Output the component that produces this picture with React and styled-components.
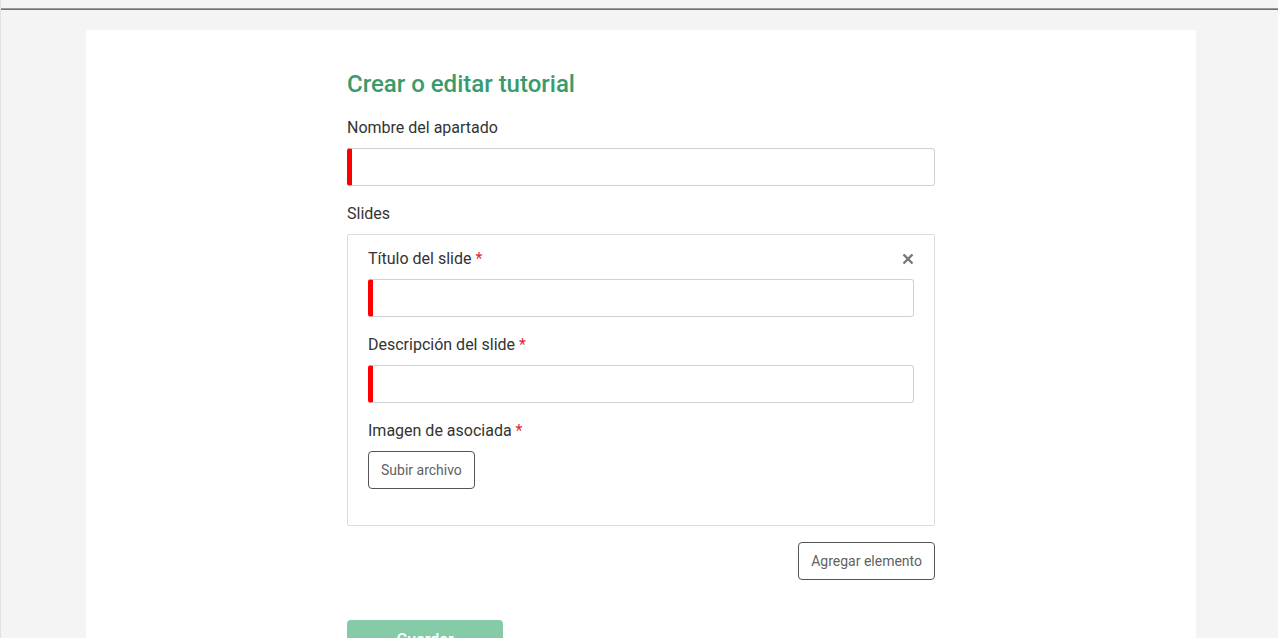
import React from 'react';
import styled, { createGlobalStyle } from 'styled-components';

const GlobalStyle = createGlobalStyle`
  html, body {
    margin: 0;
    padding: 0;
    background: #f4f4f4;
    font-family: Roboto, "Liberation Sans", sans-serif;
    color: #333;
  }
`;

const Page = styled.div`
  min-height: 638px;
  border-left: 1px solid #e2e2e2;
  box-sizing: border-box;
`;

const TopBar = styled.div`
  height: 8px;
  background: #f4f4f4;
  border-bottom: 1px solid #999;
`;

const Accent = styled.div`
  height: 1px;
  background: #3a8f68;
`;

const Main = styled.main`
  padding: 20px 82px 0 85px;
`;

const Card = styled.section`
  background: #fff;
  border-radius: 3px;
  padding: 40px 0 0;
  min-height: 620px;
  display: flex;
  justify-content: center;
`;

const Column = styled.div`
  width: 588px;
  display: flex;
  flex-direction: column;
`;

const Title = styled.h1`
  margin: 0 0 17px;
  font-size: 24px;
  line-height: 29px;
  font-weight: 500;
  color: #3a9a6c;
`;

const Label = styled.label`
  display: block;
  font-size: 16px;
  line-height: 24px;
  color: #333;
  margin: ${p => (p.$first ? '0' : '16px')} 0 8px;

  span {
    color: #e0263a;
  }
`;

const Input = styled.input`
  display: block;
  width: 100%;
  box-sizing: border-box;
  height: 38px;
  border: 1px solid #cfd3d7;
  border-left: 5px solid #ff0000;
  border-radius: 3px;
  background: #fff;
  outline: none;
  font: inherit;
  padding: 0 10px;
`;

const SlideBox = styled.div`
  border: 1px solid #dcdcdc;
  border-radius: 2px;
  padding: 12px 20px 36px;
`;

const SlideHead = styled.div`
  display: flex;
  justify-content: space-between;
  align-items: center;
  margin-bottom: 8px;

  ${Label} {
    margin: 0;
  }
`;

const Close = styled.button`
  border: none;
  background: none;
  padding: 0;
  width: 12px;
  height: 12px;
  display: flex;
  color: #777;
  cursor: pointer;
`;

const OutlineButton = styled.button`
  height: 38px;
  padding: 0 12px;
  border: 1px solid #555;
  border-radius: 4px;
  background: #fff;
  color: #626262;
  font: inherit;
  font-size: 14px;
`;

const Actions = styled.div`
  display: flex;
  justify-content: flex-end;
  margin-top: 16px;
`;

const SaveButton = styled.button`
  margin-top: 40px;
  width: 156px;
  height: 38px;
  border: none;
  border-radius: 4px;
  background: #86cba8;
  color: #fff;
  font: inherit;
  font-size: 16px;
  font-weight: 500;
`;

const App = () => {
  return (
    <>
      <GlobalStyle />
      <Page>
        <TopBar />
        <Accent />
        <Main>
          <Card>
            <Column>
              <Title>Crear o editar tutorial</Title>
              <Label $first>Nombre del apartado</Label>
              <Input />
              <Label>Slides</Label>
              <SlideBox>
                <SlideHead>
                  <Label>
                    Título del slide <span>*</span>
                  </Label>
                  <Close aria-label='cerrar'>
                    <svg width='12' height='12' viewBox='0 0 12 12'>
                      <path d='M1.5 1.5 L10.5 10.5 M10.5 1.5 L1.5 10.5' stroke='currentColor' strokeWidth='2.4' />
                    </svg>
                  </Close>
                </SlideHead>
                <Input />
                <Label>
                  Descripción del slide <span>*</span>
                </Label>
                <Input />
                <Label>
                  Imagen de asociada <span>*</span>
                </Label>
                <div>
                  <OutlineButton>Subir archivo</OutlineButton>
                </div>
              </SlideBox>
              <Actions>
                <OutlineButton>Agregar elemento</OutlineButton>
              </Actions>
              <div>
                <SaveButton>Guardar</SaveButton>
              </div>
            </Column>
          </Card>
        </Main>
      </Page>
    </>
  );
};

export default App;
